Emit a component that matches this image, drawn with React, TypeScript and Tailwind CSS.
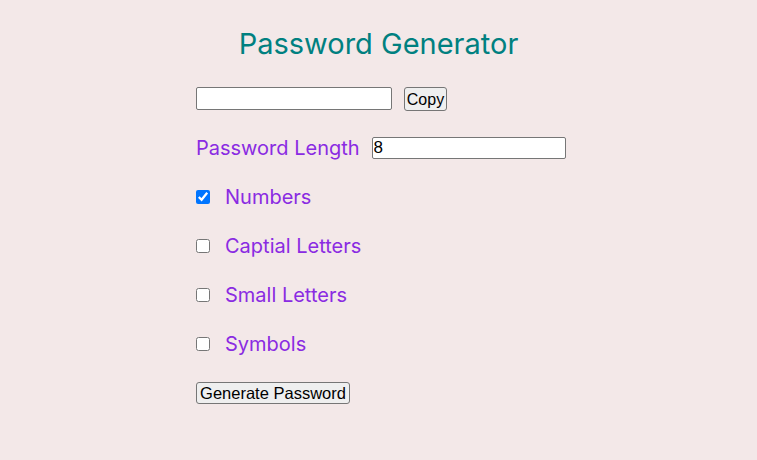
import { useState } from 'react';

const options = ['Numbers', 'Captial Letters', 'Small Letters', 'Symbols'];

export default function App() {
  const [password, setPassword] = useState('');
  const [length, setLength] = useState('8');
  const [checked, setChecked] = useState<Record<string, boolean>>({ Numbers: true });

  const generate = () => {
    let chars = '';
    if (checked['Numbers']) chars += '0123456789';
    if (checked['Captial Letters']) chars += 'ABCDEFGHIJKLMNOPQRSTUVWXYZ';
    if (checked['Small Letters']) chars += 'abcdefghijklmnopqrstuvwxyz';
    if (checked['Symbols']) chars += '!@#$%^&*()_+-=';
    if (!chars) return;
    let out = '';
    for (let i = 0; i < Number(length); i++) {
      out += chars[Math.floor(Math.random() * chars.length)];
    }
    setPassword(out);
  };

  return (
    <div className="min-h-[460px] w-full bg-[#f3e8e8] font-['Inter',sans-serif]">
      <div className="mx-auto w-[365px] pt-[20px]">
        <h1 className="mb-[6px] text-center text-[29px] leading-[48px] font-normal whitespace-nowrap text-[#008080]">
          Password Generator
        </h1>

        <div className="flex h-[49px] items-center">
          <input
            type="text"
            value={password}
            readOnly
            className="h-[23px] w-[196px] shrink-0 rounded-[2px] border border-[#767676] bg-white px-[2px] font-['Liberation_Sans',sans-serif] text-[16px] text-black"
          />
          <button
            onClick={() => navigator.clipboard?.writeText(password)}
            className="ml-[12px] h-[24px] w-[43px] shrink-0 rounded-[3px] border border-[#767676] bg-[#efefef] p-0 font-['Liberation_Sans',sans-serif] text-[16px] text-black"
          >
            Copy
          </button>
        </div>

        <div className="flex h-[49px] items-center">
          <label className="shrink-0 text-[20px] whitespace-nowrap text-[#8a2be2]">Password Length</label>
          <input
            type="text"
            value={length}
            onChange={(e) => setLength(e.target.value)}
            className="ml-[12px] h-[22px] w-[194px] shrink-0 rounded-[2px] border border-[#767676] bg-white px-[1px] font-['Liberation_Sans',sans-serif] text-[17px] text-black"
          />
        </div>

        {options.map((opt) => (
          <div key={opt} className="flex h-[49px] items-center">
            <input
              type="checkbox"
              checked={!!checked[opt]}
              onChange={() => setChecked({ ...checked, [opt]: !checked[opt] })}
              className="m-0 h-[14px] w-[14px] shrink-0"
            />
            <label className="ml-[15px] text-[20px] whitespace-nowrap text-[#8a2be2]">{opt}</label>
          </div>
        ))}

        <div className="flex h-[49px] items-center">
          <button
            onClick={generate}
            className="h-[22px] w-[154px] shrink-0 rounded-[3px] border border-[#767676] bg-[#efefef] p-0 font-['Liberation_Sans',sans-serif] text-[16.5px] leading-[20px] whitespace-nowrap text-black"
          >
            Generate Password
          </button>
        </div>
      </div>
    </div>
  );
}
